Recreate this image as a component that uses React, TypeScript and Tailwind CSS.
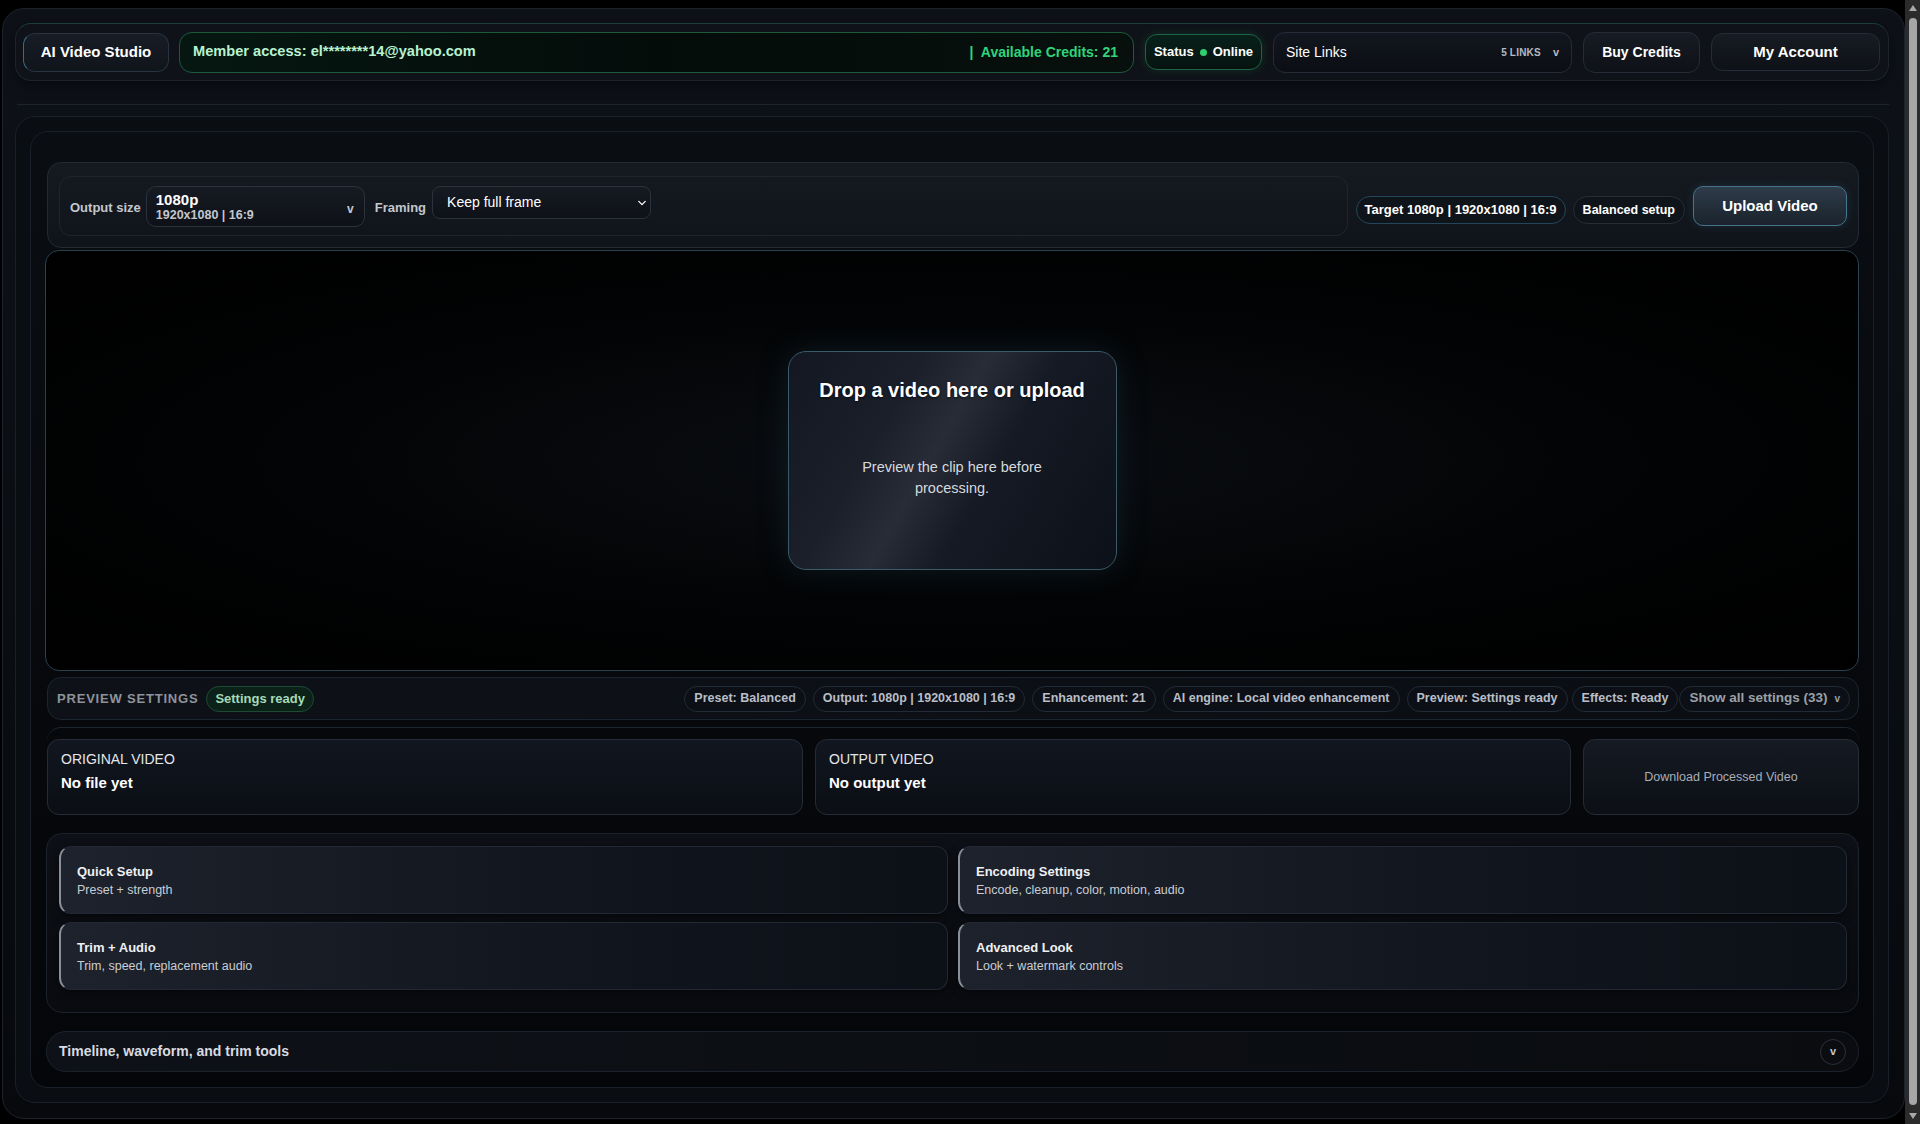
import React from "react";

function Chevron({ className = "" }: { className?: string }) {
  return (
    <svg viewBox="0 0 10 6" className={className} fill="none" stroke="currentColor" strokeWidth="1.6" strokeLinecap="round" strokeLinejoin="round">
      <path d="M1 1l4 4 4-4" />
    </svg>
  );
}

function Pill({ children }: { children: React.ReactNode }) {
  return (
    <div className="h-[26px] px-[9px] flex items-center rounded-full border border-[#222a35] bg-[#0c1016] text-[12.5px] font-bold text-[#b9bec7] whitespace-nowrap">
      {children}
    </div>
  );
}

function ToolCard({ title, sub }: { title: string; sub: string }) {
  return (
    <div className="h-[68px] rounded-[12px] border border-[#232934] border-l-2 border-l-[#8a909a] bg-gradient-to-r from-[#1d222c] via-[#121720] to-[#0c1017] pl-[16px] pt-[1px] flex flex-col justify-center shadow-[0_2px_8px_rgba(0,0,0,0.5)]">
      <div className="text-[13px] font-bold text-[#eef0f3] leading-[16px]">{title}</div>
      <div className="text-[12.5px] text-[#c9cdd4] leading-[15px] mt-[3px]">{sub}</div>
    </div>
  );
}

function Scrollbar() {
  return (
    <div className="w-[15px] shrink-0 h-[1124px] bg-[#2b2b2b] flex flex-col items-center">
      <svg viewBox="0 0 8 6" className="mt-[5px] w-[8px] h-[6px]">
        <path d="M4 0L8 6H0Z" fill="#a8a8a8" />
      </svg>
      <div className="mt-[7px] w-[8px] flex-1 rounded-[4px] bg-[#a6a6a6]" />
      <svg viewBox="0 0 8 6" className="mt-[8px] mb-[5px] w-[8px] h-[6px]">
        <path d="M0 0H8L4 6Z" fill="#a8a8a8" />
      </svg>
    </div>
  );
}

export default function App() {
  return (
    <div className="h-[1124px] overflow-hidden bg-black flex font-['Liberation_Sans',Arial,sans-serif]">
      <div className="flex-1 min-w-0 pt-[8px] pl-[2px]">
        {/* Frame A */}
        <div className="rounded-[22px] border border-[#1d232c] bg-gradient-to-b from-[#0e1218] to-[#07090d] pt-[14px] pb-[15px] pl-[12px] pr-[15px]">
          {/* Header */}
          <div className="h-[58px] rounded-[16px] border border-[#1e242d] border-t-[#1d3a3c] bg-[#0f1319] flex items-center pl-[7px] pr-[8px] shadow-[0_4px_14px_rgba(0,0,0,0.5)]">
            <div className="h-[39px] w-[146px] rounded-[12px] border border-[#2a3340] border-l-[#3d6a80] bg-gradient-to-b from-[#181c25] to-[#10141b] flex items-center justify-center text-[15px] font-bold text-white">
              AI Video Studio
            </div>
            <div className="ml-[10px] flex-1 h-[41px] rounded-[13px] border border-[#1d5a3d] bg-gradient-to-r from-[#061711] via-[#040c0a] to-[#07100d] flex items-center justify-between pl-[13px] pr-[15px]">
              <span className="text-[14.6px] font-bold text-[#b8f2cf]">Member access: el********14@yahoo.com</span>
              <span className="text-[14px] font-bold text-[#2fd47a]">|&nbsp; Available Credits: 21</span>
            </div>
            <div className="ml-[11px] h-[36px] w-[117px] rounded-[12px] border border-[#1f6445] bg-gradient-to-b from-[#08201a] to-[#061410] flex items-center justify-center gap-[6px] text-[13px] font-bold text-white shadow-[0_0_10px_rgba(34,197,94,0.15)]">
              <span>Status</span>
              <span className="w-[7px] h-[7px] rounded-full bg-[#2fd06f]" />
              <span>Online</span>
            </div>
            <div className="ml-[11px] h-[41px] w-[299px] rounded-[12px] border border-[#262c37] bg-gradient-to-b from-[#12161e] to-[#0b0e14] flex items-center pl-[12px] pr-[12px]">
              <span className="text-[14px] text-white">Site Links</span>
              <span className="ml-auto text-[10px] font-bold text-[#b5bac2] tracking-[0.2px]">5 LINKS</span>
              <span className="ml-[12px] text-[11px] font-bold text-[#b5bac2]">v</span>
            </div>
            <div className="ml-[11px] h-[41px] w-[117px] rounded-[12px] border border-[#262c37] bg-gradient-to-b from-[#171b23] to-[#0e1117] flex items-center justify-center text-[14px] font-bold text-white">
              Buy Credits
            </div>
            <div className="ml-[11px] h-[38px] w-[169px] rounded-[12px] border border-[#262c37] bg-gradient-to-b from-[#171b23] to-[#0e1117] flex items-center justify-center text-[15px] font-bold text-white">
              My Account
            </div>
          </div>

          {/* divider */}
          <div className="mt-[23px] ml-[2px] border-t border-[#1e242d]" />

          {/* Container C */}
          <div className="mt-[11px] rounded-[20px] border border-[#1a2029] bg-[#0a0d12] p-[14px]">
            {/* Container D */}
            <div className="rounded-[18px] border border-[#1a2029] bg-gradient-to-b from-[#0a0d12] to-[#050609] pt-[30px] pl-[16px] pr-[14px] pb-[15px]">
              {/* Toolbar */}
              <div className="h-[86px] rounded-[14px] border border-[#232a34] bg-gradient-to-b from-[#151a21] to-[#10141a] flex items-start pl-[11px] pr-[11px] pt-[13px]">
                <div className="flex-1 h-[60px] rounded-[12px] border border-[#1f252e] flex items-start pt-[9px] pl-[10px]">
                  <span className="mt-[12px] text-[13px] font-bold text-[#c3c7ce]">Output size</span>
                  <div className="ml-[5px] w-[219px] h-[41px] rounded-[10px] border border-[#2b323d] bg-gradient-to-b from-[#161a22] to-[#0e1117] flex items-center pl-[9px] pr-[10px]">
                    <div className="flex flex-col">
                      <span className="text-[15px] font-bold text-white leading-[16px]">1080p</span>
                      <span className="text-[12.5px] font-bold text-[#c3c7ce] leading-[14px]">1920x1080 | 16:9</span>
                    </div>
                    <span className="ml-auto text-[12px] font-bold text-[#c3c7ce] mt-[4px]">v</span>
                  </div>
                  <span className="ml-[10px] mt-[12px] text-[13px] font-bold text-[#c3c7ce]">Framing</span>
                  <div className="ml-[6px] w-[219px] h-[33px] rounded-[8px] border border-[#2b323d] bg-gradient-to-b from-[#161a22] to-[#0e1117] flex items-center pl-[14px] pr-[4px]">
                    <span className="text-[14px] text-white">Keep full frame</span>
                    <Chevron className="ml-auto w-[8px] h-[6px] text-white" />
                  </div>
                </div>
                <div className="ml-[8px] mt-[20px] h-[28px] px-[8px] rounded-full border border-[#24465a] bg-[#0f141b] flex items-center text-[13px] font-bold text-white whitespace-nowrap">
                  Target 1080p | 1920x1080 | 16:9
                </div>
                <div className="ml-[7px] mt-[20px] h-[28px] px-[9px] rounded-full border border-[#262d37] bg-[#0f141b] flex items-center text-[12.5px] font-bold text-white whitespace-nowrap">
                  Balanced setup
                </div>
                <div className="ml-[8px] mt-[10px] h-[40px] w-[154px] rounded-[10px] border border-[#44758c] bg-gradient-to-b from-[#2e3b49] to-[#1a232d] flex items-center justify-center text-[15px] font-bold text-white shadow-[0_0_10px_rgba(70,130,160,0.2)]">
                  Upload Video
                </div>
              </div>

              {/* Video area */}
              <div className="mt-[2px] -ml-[2px] h-[421px] rounded-[14px] border border-[#27414f] bg-[radial-gradient(ellipse_at_center,#0b0e13_0%,#020304_55%,#000000_100%)] flex items-center justify-center">
                <div className="w-[329px] h-[219px] rounded-[18px] border border-[#3a5a6a] bg-[linear-gradient(120deg,#121722_0%,#1a1f2a_30%,#272c37_45%,#151a24_60%,#0c1019_100%)] shadow-[0_0_30px_rgba(40,80,100,0.25)] flex flex-col items-center pt-[23px]">
                  <div className="text-[20px] font-bold text-white [text-shadow:0_1px_3px_rgba(0,0,0,0.7)]">Drop a video here or upload</div>
                  <div className="mt-[52px] w-[190px] text-center text-[14.5px] leading-[21px] text-[#d6d9de]">Preview the clip here before processing.</div>
                </div>
              </div>

              {/* Preview settings bar */}
              <div className="mt-[6px] h-[43px] rounded-[14px] border border-[#1b2530] bg-gradient-to-r from-[#0e1218] to-[#0a0d12] flex items-center pl-[9px] pr-[8px]">
                <span className="text-[13px] font-bold tracking-[0.8px] text-[#8e939b]">PREVIEW SETTINGS</span>
                <span className="ml-[8px] h-[26px] px-[8px] rounded-full border border-[#1e4a33] bg-[#0c2219] flex items-center text-[13px] font-bold text-[#a6d9b8]">Settings ready</span>
                <div className="ml-auto flex items-center gap-[7px]">
                  <Pill>Preset: Balanced</Pill>
                  <Pill>Output: 1080p | 1920x1080 | 16:9</Pill>
                  <Pill>Enhancement: 21</Pill>
                  <Pill>AI engine: Local video enhancement</Pill>
                  <Pill>Preview: Settings ready</Pill>
                  <div className="-ml-[3px] flex items-center gap-[1px]">
                    <Pill>Effects: Ready</Pill>
                    <div className="h-[26px] pl-[9px] pr-[9px] flex items-center rounded-full border border-[#222a35] bg-[#0c1016] text-[13.5px] font-bold text-[#9ba0a8] whitespace-nowrap">
                      Show all settings (33)<span className="ml-[7px] text-[10px]">v</span>
                    </div>
                  </div>
                </div>
              </div>

              {/* Container E with video cards */}
              <div className="mt-[7px] rounded-[14px] border-t border-[#1a2632] pt-[11px]">
                <div className="flex gap-[12px] h-[76px]">
                  <div className="flex-1 rounded-[12px] border border-[#252c37] bg-gradient-to-b from-[#111620] to-[#0b0e14] pl-[13px] pt-[9px]">
                    <div className="text-[14px] text-[#e4e6ea]">ORIGINAL VIDEO</div>
                    <div className="mt-[2px] text-[15px] font-bold text-white">No file yet</div>
                  </div>
                  <div className="flex-1 rounded-[12px] border border-[#252c37] bg-gradient-to-b from-[#111620] to-[#0b0e14] pl-[13px] pt-[9px]">
                    <div className="text-[14px] text-[#e4e6ea]">OUTPUT VIDEO</div>
                    <div className="mt-[2px] text-[15px] font-bold text-white">No output yet</div>
                  </div>
                  <div className="w-[276px] rounded-[12px] border border-[#252c37] bg-gradient-to-b from-[#151a23] to-[#0c0f15] flex items-center justify-center text-[12.5px] text-[#a9aeb6]">
                    Download Processed Video
                  </div>
                </div>
              </div>

              {/* Tools container */}
              <div className="mt-[18px] -ml-[1px] rounded-[16px] border border-[#1c222b] bg-gradient-to-b from-[#0d1016] to-[#090b0f] pt-[12px] pl-[12px] pr-[11px] pb-[22px]">
                <div className="grid grid-cols-2 gap-x-[10px] gap-y-[8px]">
                  <ToolCard title="Quick Setup" sub="Preset + strength" />
                  <ToolCard title="Encoding Settings" sub="Encode, cleanup, color, motion, audio" />
                  <ToolCard title="Trim + Audio" sub="Trim, speed, replacement audio" />
                  <ToolCard title="Advanced Look" sub="Look + watermark controls" />
                </div>
              </div>

              {/* Timeline bar */}
              <div className="mt-[18px] -ml-[1px] h-[41px] rounded-[20px] border border-[#1c222b] bg-gradient-to-r from-[#0e1117] to-[#0a0c10] flex items-center pl-[12px] pr-[12px]">
                <span className="text-[14px] font-bold text-[#d8dbe0]">Timeline, waveform, and trim tools</span>
                <div className="ml-auto w-[26px] h-[26px] rounded-full border border-[#2a313b] flex items-center justify-center text-[11px] font-bold text-[#c3c7ce]">v</div>
              </div>
            </div>
          </div>
        </div>
      </div>
      <Scrollbar />
    </div>
  );
}
